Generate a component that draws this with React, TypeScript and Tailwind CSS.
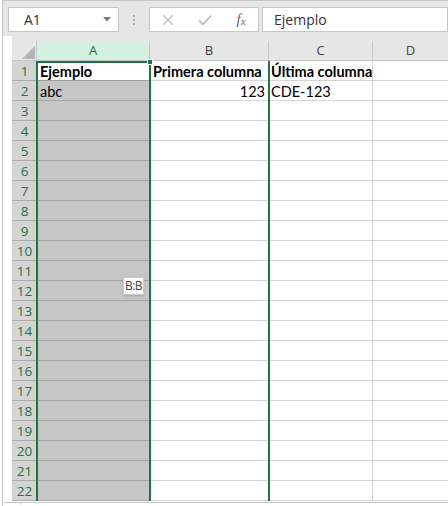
import React from 'react';

type Cell = { text: string; bold?: boolean; right?: boolean };

const data: Record<number, Cell[]> = {
  1: [
    { text: 'Ejemplo', bold: true },
    { text: 'Primera columna', bold: true },
    { text: 'Última columna', bold: true },
    { text: '' },
  ],
  2: [{ text: 'abc' }, { text: '123', right: true }, { text: 'CDE-123' }, { text: '' }],
};

const rows = Array.from({ length: 22 }, (_, i) => i + 1);

function Toolbar() {
  return (
    <div className="h-[36px] bg-[#e6e6e6] border-t border-[#c6c6c6] flex items-start pt-[6px] pl-[5px] font-['Open_Sans',sans-serif]">
      <div className="w-[111px] h-[25px] bg-white border border-[#c6c6c6] flex items-center justify-between pl-[15px] pr-[7px]">
        <span className="text-[14px] text-[#333]">A1</span>
        <svg width="8" height="5" viewBox="0 0 8 5">
          <path d="M0 0 L8 0 L4 4.5 Z" fill="#777" />
        </svg>
      </div>
      <div className="w-[30px] h-[25px] flex flex-col items-center justify-center gap-[2px]">
        <span className="w-[2px] h-[2px] bg-[#b0b0b0]" />
        <span className="w-[2px] h-[2px] bg-[#b0b0b0]" />
        <span className="w-[2px] h-[2px] bg-[#b0b0b0]" />
      </div>
      <div className="w-[110px] h-[25px] bg-white border border-[#c6c6c6] flex items-center">
        <div className="w-[36px] flex justify-center">
          <svg width="12" height="12" viewBox="0 0 12 12">
            <path d="M1 1 L11 11 M11 1 L1 11" stroke="#bdbdbd" strokeWidth="1.3" />
          </svg>
        </div>
        <div className="w-[38px] flex justify-center">
          <svg width="14" height="12" viewBox="0 0 14 12">
            <path d="M1 6.5 L5 10.5 L13 1.5" stroke="#bdbdbd" strokeWidth="1.8" fill="none" />
          </svg>
        </div>
        <div className="w-[34px] flex justify-center font-['Liberation_Serif',serif] italic text-[#666] text-[15px] leading-none">
          <span>f</span>
          <span className="text-[11px] mt-[4px]">x</span>
        </div>
      </div>
      <div className="ml-[3px] flex-1 h-[25px] bg-white border border-[#c6c6c6] flex items-center pl-[11px]">
        <span className="text-[14px] text-[#333]">Ejemplo</span>
      </div>
    </div>
  );
}

function Sheet() {
  return (
    <div className="relative ml-[9px] pt-[5px] bg-white">
      <div className="absolute top-0 left-0 right-0 h-[5px] bg-[#e6e6e6]" />
      {/* column headers */}
      <div className="flex h-[20px] font-['Open_Sans',sans-serif] text-[13px] text-[#444]">
        <div className="w-[25px] bg-[#e6e6e6] border-r border-b border-[#c6c6c6] flex items-end justify-end pr-[1px] pb-[1px]">
          <svg width="13" height="13" viewBox="0 0 13 13">
            <path d="M13 0 L13 13 L0 13 Z" fill="#b4b4b4" />
          </svg>
        </div>
        <div className="w-[113px] bg-[#d3f0e0] border-r border-b border-[#c6c6c6] flex items-center justify-center pt-[1px] text-[#217346]">A</div>
        <div className="w-[119px] bg-[#e6e6e6] border-r border-b border-[#c6c6c6] flex items-center justify-center pt-[1px]">B</div>
        <div className="w-[104px] bg-[#e6e6e6] border-r border-b border-[#c6c6c6] flex items-center justify-center pt-[1px]">C</div>
        <div className="flex-1 bg-[#e6e6e6] border-b border-[#c6c6c6] flex items-center justify-center pt-[1px]">D</div>
      </div>
      {rows.map((r) => {
        const cells = data[r] || [{ text: '' }, { text: '' }, { text: '' }, { text: '' }];
        return (
          <div key={r} className="flex h-[20px] font-[Lato,sans-serif] text-[14.5px] text-black">
            <div className="w-[25px] bg-[#d4d4d4] border-b border-[#ababab] flex items-center justify-center pt-[1px] font-['Open_Sans',sans-serif] text-[13.5px] text-[#217346]">
              {r}
            </div>
            <div
              className={
                r === 1
                  ? 'w-[113px] bg-white border-b border-[#a0a0a0] px-[3px] pt-[1px] leading-[19px] whitespace-nowrap overflow-hidden'
                  : 'w-[113px] bg-[#c6c6c6] border-b border-[#a6a6a6] px-[3px] pt-[1px] leading-[19px] whitespace-nowrap overflow-hidden'
              }
            >
              <span className={cells[0].bold ? 'font-bold' : ''}>{cells[0].text}</span>
            </div>
            <div className="w-[119px] border-r border-b border-[#d4d4d4] px-[3px] pt-[1px] leading-[19px] whitespace-nowrap overflow-hidden">
              <div className={cells[1].right ? 'text-right' : 'text-left'}>
                <span className={cells[1].bold ? 'font-bold' : ''}>{cells[1].text}</span>
              </div>
            </div>
            <div className="w-[104px] border-r border-b border-[#d4d4d4] px-[2px] pt-[1px] leading-[19px] whitespace-nowrap overflow-hidden">
              <span className={cells[2].bold ? 'font-bold' : ''}>{cells[2].text}</span>
            </div>
            <div className="flex-1 border-b border-[#d4d4d4]" />
          </div>
        );
      })}

      {/* selection outlines */}
      <div className="absolute left-[24px] top-[25px] bottom-0 w-[2px] bg-[#217346]" />
      <div className="absolute left-[24px] top-[25px] w-[115px] h-[2px] bg-[#217346]" />
      <div className="absolute left-[137px] top-[25px] bottom-0 w-[2px] bg-[#217346]" />
      <div className="absolute left-[256px] top-[25px] bottom-0 w-[2px] bg-[#217346]" />
      <div className="absolute left-[135px] top-[23px] w-[6px] h-[6px] bg-[#217346] border border-white" />

      {/* drag tooltip */}
      <div className="absolute left-[111px] top-[241px] w-[21px] h-[18px] bg-white border border-[#c8c8c8] shadow-sm flex items-center justify-center font-['Open_Sans',sans-serif] text-[12px] tracking-[-0.5px] text-[#444]">
        B:B
      </div>
    </div>
  );
}

export default function App() {
  return (
    <div className="w-[448px] h-[506px] bg-white overflow-hidden">
      <div className="ml-[2px] h-full border-l border-[#c6c6c6] flex flex-col">
        <Toolbar />
        <Sheet />
        <div className="mt-[1px] ml-[1px] border-t border-[#c6c6c6] h-[3px] flex">
          <div className="ml-[16px] w-[1px] h-full bg-[#c6c6c6]" />
        </div>
      </div>
    </div>
  );
}
